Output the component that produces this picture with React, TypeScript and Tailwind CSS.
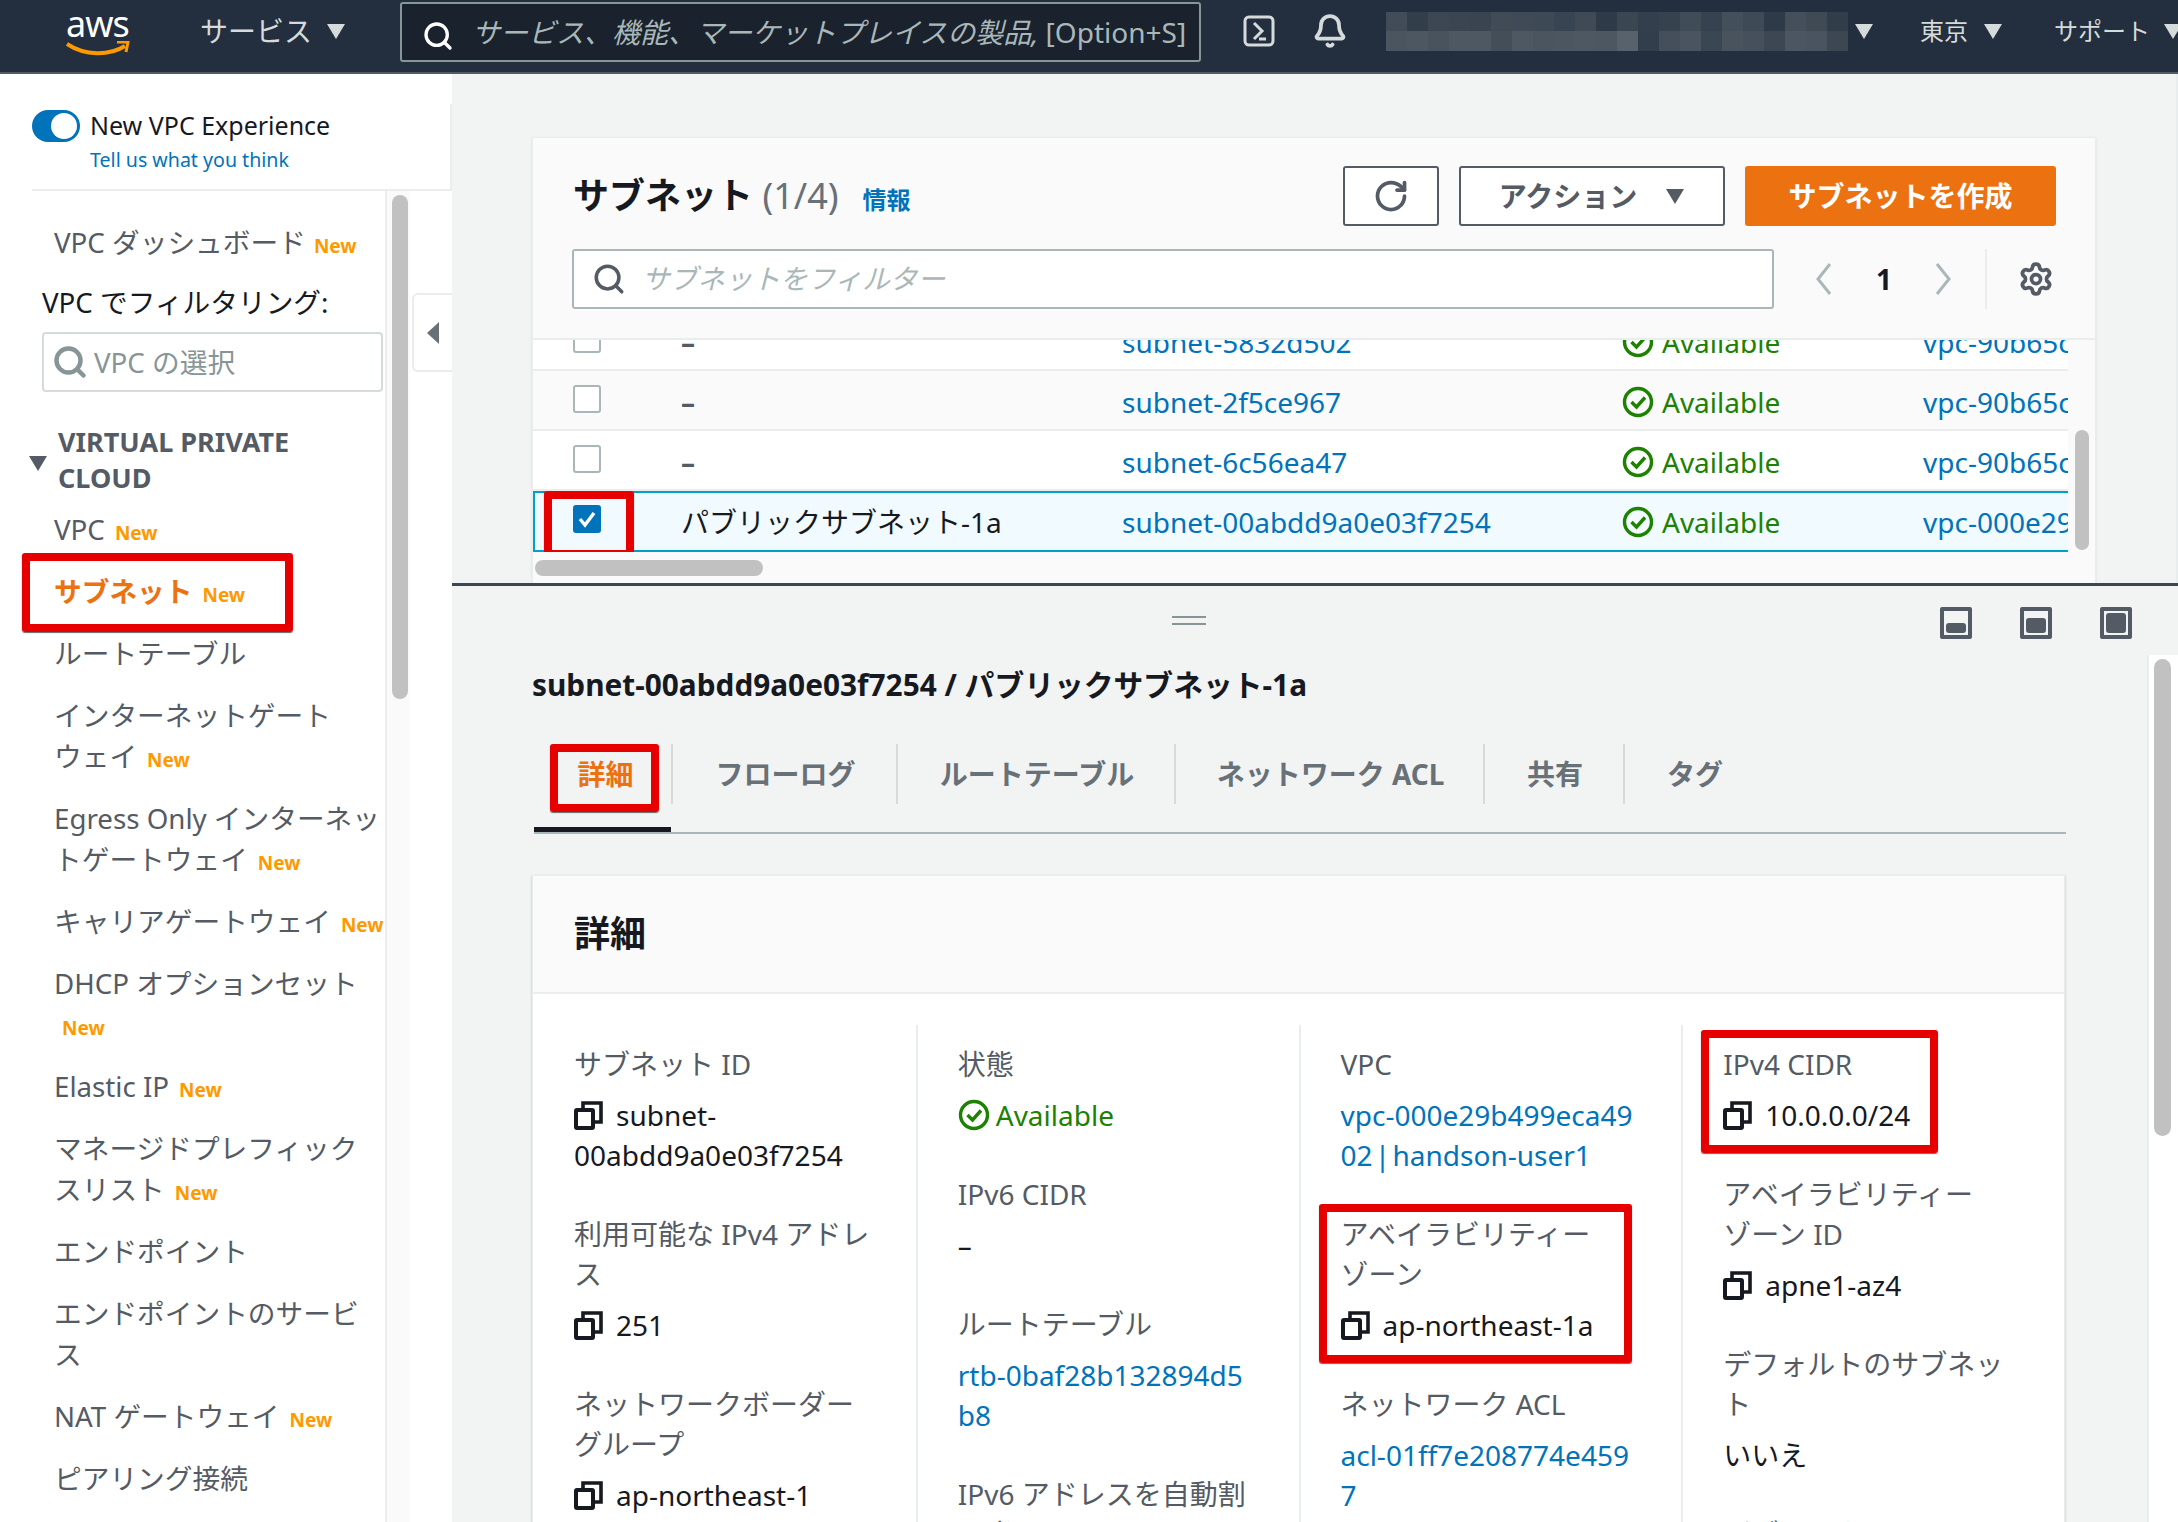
import React from 'react';
import { RotateCw, Search, Settings, Bell } from 'lucide-react';

const font = { fontFamily: '"Noto Sans", "Noto Sans CJK JP", sans-serif' };

const mosaicTop = ['#414c58', '#323e4a', '#3c4753', '#3a4551', '#394450', '#404b56', '#3f4a56', '#3d4955', '#384451', '#3f4a56', '#2e3a48', '#3a4652', '#333f4c', '#36424e', '#404c58', '#36424f', '#43505c', '#3e4a56', '#2e3a48', '#454f5b', '#3f4a55', '#323d4a'];
const mosaicBottom = ['#4a5560', '#4d5762', '#48535e', '#4e5862', '#4e5862', '#434e59', '#4e5863', '#4a5560', '#4c5661', '#4e5863', '#4d5762', '#58626c', '#323e4c', '#454f5b', '#4a5460', '#3a4651', '#48535e', '#46505c', '#3c4753', '#4c5662', '#4a5460', '#3c4751'];

function Caret({ className = '' }: { className?: string }) {
  return (
    <svg className={`shrink-0 ${className}`} width="20" height="17" viewBox="0 0 20 17">
      <path d="M1 1h18l-9 15z" fill="currentColor" />
    </svg>
  );
}

function New({ className = '' }: { className?: string }) {
  return <span className={`text-[19px] leading-none font-bold text-[#ff9900] ml-[8px] ${className}`}>New</span>;
}

function RedBox({ className }: { className: string }) {
  return <div className={`absolute border-[8px] border-[#e60000] rounded-[3px] shadow-[0_1px_1px_#666] pointer-events-none ${className}`} />;
}

function CopyIcon() {
  return (
    <svg className="shrink-0 mr-[13px] text-[#16191f]" width="29" height="29" viewBox="0 0 29 29" fill="none" stroke="currentColor" strokeWidth="4">
      <rect x="2" y="9" width="17" height="18" rx="1" />
      <path d="M9 8V2h18v19h-7" strokeWidth="3.6" />
    </svg>
  );
}

function CheckCircle({ size = 32 }: { size?: number }) {
  return (
    <svg className="shrink-0 text-[#1d8102]" width={size} height={size} viewBox="0 0 32 32" fill="none" stroke="currentColor">
      <circle cx="16" cy="16" r="13.5" strokeWidth="3.4" />
      <path d="M9.5 16l5 5 8.5-9.5" strokeWidth="3.4" />
    </svg>
  );
}

function PanelIcon({ inner }: { inner: string }) {
  return (
    <div className="w-[32px] h-[32px] border-[4px] border-[#545b64] rounded-[2px] flex items-end justify-center p-[2px]">
      <div className={`w-full bg-[#545b64] rounded-[3px] ${inner}`} />
    </div>
  );
}

function Chevron({ flip = false, className = '' }: { flip?: boolean; className?: string }) {
  return (
    <svg className={`shrink-0 text-[#aab7b8] ${className}`} width="18" height="34" viewBox="0 0 18 34" fill="none" stroke="currentColor" strokeWidth="3">
      <path d={flip ? 'M3 2l12 15L3 32' : 'M15 2L3 17l12 15'} />
    </svg>
  );
}

function TopNav() {
  return (
    <header className="h-[74px] shrink-0 bg-[#232f3e] border-b-[2px] border-[#545b64] flex items-center pb-[10px] text-[#d5dbdb] text-[28px] overflow-hidden">
      <div className="w-[200px] shrink-0 pl-[66px] flex flex-col items-start leading-none">
        <span className="text-white text-[36px] leading-[36px] tracking-[-1px]">aws</span>
        <svg className="-mt-[1px]" width="66" height="16" viewBox="0 0 66 16" fill="none">
          <path d="M1 3c18 12 42 12 58 2" stroke="#ff9900" strokeWidth="4" />
          <path d="M51 1l11 0-2 10" stroke="#ff9900" strokeWidth="3" />
        </svg>
      </div>
      <span className="w-[126px] shrink-0 whitespace-nowrap">サービス</span>
      <Caret />
      <div className="ml-[54px] w-[801px] h-[60px] shrink-0 bg-[#19222d] border-[2px] border-[#879596] rounded-[3px] flex items-center text-[#aab7b8] mt-[1px]">
        <Search className="ml-[20px] mr-[18px] mt-[9px] text-white shrink-0" size={32} strokeWidth={2.5} />
        <span className="whitespace-nowrap"><span className="italic">サービス、機能、マーケットプレイスの製品,</span> [Option+S]</span>
      </div>
      <svg className="ml-[42px] shrink-0" width="32" height="32" viewBox="0 0 32 32" fill="none" stroke="#d5dbdb" strokeWidth="3">
        <rect x="2" y="2" width="28" height="28" rx="4" />
        <path d="M11 8l8 8-8 8M16 24h7" />
      </svg>
      <Bell className="ml-[37px] shrink-0" size={36} strokeWidth={2.5} />
      <svg className="ml-[38px] shrink-0" width="462" height="39" viewBox="0 0 462 39" shapeRendering="crispEdges">
        {mosaicTop.map((c, i) => <rect key={i} x={i * 21} y="0" width="21" height="19" fill={c} />)}
        {mosaicBottom.map((c, i) => <rect key={i} x={i * 21} y="19" width="21" height="20" fill={c} />)}
      </svg>
      <Caret className="ml-[6px]" />
      <span className="ml-[46px] text-[24px] whitespace-nowrap shrink-0">東京</span>
      <Caret className="ml-[15px]" />
      <span className="ml-[51px] text-[24px] whitespace-nowrap shrink-0">サポート</span>
      <Caret className="ml-[13px]" />
    </header>
  );
}

const navItems: { lines: string[]; isNew?: boolean; newBelow?: boolean }[] = [
  { lines: ['VPC'], isNew: true },
  { lines: ['サブネット'], isNew: true },
  { lines: ['ルートテーブル'] },
  { lines: ['インターネットゲート', 'ウェイ'], isNew: true },
  { lines: ['Egress Only インターネッ', 'トゲートウェイ'], isNew: true },
  { lines: ['キャリアゲートウェイ'], isNew: true },
  { lines: ['DHCP オプションセット'], isNew: true, newBelow: true },
  { lines: ['Elastic IP'], isNew: true },
  { lines: ['マネージドプレフィック', 'スリスト'], isNew: true },
  { lines: ['エンドポイント'] },
  { lines: ['エンドポイントのサービ', 'ス'] },
  { lines: ['NAT ゲートウェイ'], isNew: true },
  { lines: ['ピアリング接続'] },
];

function Sidebar() {
  return (
    <aside className="w-[452px] shrink-0 h-full bg-white flex flex-col relative overflow-hidden">
      <div className="h-[117px] shrink-0 ml-[32px] border-b-[2px] border-[#eaeded] pt-[30px]">
        <div className="h-full border-r-[2px] border-[#eaeded] pt-[4px] flex flex-col">
          <div className="flex items-center h-[36px]">
            <div className="w-[48px] h-[32px] rounded-full bg-[#0073bb] flex items-center justify-end pr-[3px] shrink-0">
              <div className="w-[26px] h-[26px] rounded-full bg-white" />
            </div>
            <span className="ml-[10px] text-[25px] text-[#16191f] whitespace-nowrap">New VPC Experience</span>
          </div>
          <span className="ml-[58px] mt-[2px] text-[19.6px] leading-[28px] text-[#0073bb] whitespace-nowrap">Tell us what you think</span>
        </div>
      </div>
      <div className="flex-1 flex min-h-0">
        <nav className="w-[387px] shrink-0 border-r-[2px] border-[#eaeded] text-[27.7px] leading-[41px] text-[#545b64] overflow-hidden">
          <div className="pl-[54px] mt-[31px] whitespace-nowrap">
            VPC ダッシュボード<New />
          </div>
          <div className="pl-[42px] mt-[19px] text-[#16191f] whitespace-nowrap">VPC でフィルタリング:</div>
          <div className="ml-[42px] w-[341px] h-[60px] mt-[9px] border-[2px] border-[#d5dbdb] rounded-[4px] flex items-center text-[#879596]">
            <Search className="ml-[8px] mr-[6px] shrink-0" size={36} strokeWidth={3} />
            <span className="whitespace-nowrap">VPC の選択</span>
          </div>
          <div className="flex items-center mt-[31px] pl-[28px] h-[74px]">
            <Caret className="text-[#545b64] mt-[6px]" />
            <div className="ml-[10px] font-bold text-[27px] leading-[36px] whitespace-nowrap">VIRTUAL PRIVATE<br />CLOUD</div>
          </div>
          <ul className="mt-[12px] flex flex-col gap-[21px] pl-[54px]">
            {navItems.map((item) => {
              const active = item.lines[0] === 'サブネット';
              return (
                <li key={item.lines[0]} className={`relative whitespace-nowrap ${active ? 'font-bold text-[#ec7211]' : ''}`}>
                  {item.lines.map((line, i) => (
                    <div key={line}>
                      {line}
                      {item.isNew && !item.newBelow && i === item.lines.length - 1 && <New className="ml-[10px]" />}
                    </div>
                  ))}
                  {item.newBelow && <div><New /></div>}
                  {active && <RedBox className="-left-[32px] -top-[18px] w-[271px] h-[79px]" />}
                </li>
              );
            })}
          </ul>
        </nav>
        <div className="w-[23px] shrink-0 bg-[#fafafa] pt-[4px] pl-[5px]">
          <div className="w-[16px] h-[504px] rounded-full bg-[#c1c1c1]" />
        </div>
      </div>
      <div className="absolute left-[412px] top-[219px] w-[40px] h-[79px] bg-white border-[2px] border-r-0 border-[#eaeded] rounded-l-[6px] flex items-center justify-center">
        <svg width="14" height="24" viewBox="0 0 14 24"><path d="M13 1v22L1 12z" fill="#687078" /></svg>
      </div>
    </aside>
  );
}

const rows = [
  { name: '–', subnet: 'subnet-5832d502', vpc: 'vpc-90b65c7f', bg: 'bg-white' },
  { name: '–', subnet: 'subnet-2f5ce967', vpc: 'vpc-90b65c7f', bg: 'bg-[#fafafa]' },
  { name: '–', subnet: 'subnet-6c56ea47', vpc: 'vpc-90b65c7f', bg: 'bg-white' },
];

function SubnetPanel() {
  return (
    <section className="h-[509px] shrink-0 pt-[64px] pl-[80px] border-r-[2px] border-[#eaeded]">
      <div className="w-[1564px] h-full bg-[#fafafa] border-x border-[#eaeded] shadow-[0_0_2px_#d5dbdb] flex flex-col relative">
        <div className="h-[202px] shrink-0 border-b-[2px] border-[#eaeded]">
          <div className="flex items-center pt-[28px] pl-[40px] h-[88px]">
            <h1 className="text-[36px] font-bold text-[#16191f] whitespace-nowrap">サブネット <span className="font-normal text-[#687078]">(1/4)</span></h1>
            <span className="ml-[24px] mt-[8px] text-[24px] font-bold text-[#0073bb]">情報</span>
            <button className="ml-auto w-[96px] h-[60px] bg-white border-[2px] border-[#545b64] rounded-[3px] flex items-center justify-center text-[#545b64]">
              <RotateCw size={36} strokeWidth={2.5} />
            </button>
            <button className="ml-[20px] w-[266px] h-[60px] bg-white border-[2px] border-[#545b64] rounded-[3px] flex items-center justify-center text-[#545b64] text-[28px] font-bold">
              アクション<Caret className="ml-[28px]" />
            </button>
            <button className="ml-[20px] mr-[39px] w-[311px] h-[60px] bg-[#ec7211] rounded-[3px] text-white text-[28px] font-bold">サブネットを作成</button>
          </div>
          <div className="flex items-center mt-[23px] pl-[39px]">
            <div className="w-[1202px] h-[60px] bg-white border-[2px] border-[#aab7b8] rounded-[3px] flex items-center text-[#aab7b8] italic text-[27.6px]">
              <Search className="ml-[18px] mr-[16px] text-[#545b64] shrink-0" size={34} strokeWidth={2.5} />
              サブネットをフィルター
            </div>
            <Chevron className="ml-[41px]" />
            <span className="ml-[39px] w-[24px] text-center text-[28px] font-bold text-[#16191f]">1</span>
            <Chevron flip className="ml-[38px]" />
            <div className="ml-[33px] h-[60px] border-l-[2px] border-[#eaeded]" />
            <Settings className="ml-[31px] text-[#545b64]" size={36} strokeWidth={2.5} />
          </div>
        </div>
        <div className="w-[1535px] h-[212px] overflow-hidden text-[28px]">
          <div className="-mt-[29px]">
            {rows.map((row) => (
              <div key={row.subnet} className={`h-[60px] pt-[3px] flex items-center border-b-[2px] border-[#eaeded] ${row.bg}`}>
                <div className="w-[148px] shrink-0 pl-[40px]">
                  <div className="w-[28px] h-[28px] mb-[6px] border-[2px] border-[#aab7b8] rounded-[3px] bg-white" />
                </div>
                <span className="w-[441px] shrink-0 text-[#545b64] font-bold">{row.name}</span>
                <span className="w-[500px] shrink-0 text-[#0073bb] whitespace-nowrap">{row.subnet}</span>
                <CheckCircle />
                <span className="w-[269px] pl-[8px] shrink-0 text-[#1d8102]">Available</span>
                <span className="text-[#0073bb] whitespace-nowrap">{row.vpc}</span>
              </div>
            ))}
            <div className="h-[61px] flex items-center border-y-[2px] border-l-[2px] border-[#00a1c9] bg-[#f1faff]">
              <div className="w-[146px] shrink-0 pl-[38px] relative">
                <div className="w-[28px] h-[28px] mb-[6px] rounded-[3px] bg-[#0073bb] flex items-center justify-center">
                  <svg width="20" height="20" viewBox="0 0 20 20" fill="none" stroke="white" strokeWidth="3.4"><path d="M3 10l5 6 9-12" /></svg>
                </div>
                <RedBox className="left-[9px] -top-[14px] w-[90px] h-[67px]" />
              </div>
              <span className="w-[441px] shrink-0 text-[#16191f] whitespace-nowrap">パブリックサブネット-1a</span>
              <span className="w-[500px] shrink-0 text-[#0073bb] whitespace-nowrap">subnet-00abdd9a0e03f7254</span>
              <CheckCircle />
              <span className="w-[269px] pl-[8px] shrink-0 text-[#1d8102]">Available</span>
              <span className="text-[#0073bb] whitespace-nowrap">vpc-000e29b</span>
            </div>
          </div>
        </div>
        <div className="pt-[8px] pl-[2px]">
          <div className="w-[228px] h-[16px] rounded-full bg-[#c1c1c1]" />
        </div>
        <div className="absolute right-[6px] top-[292px] w-[14px] h-[120px] rounded-full bg-[#c1c1c1]" />
      </div>
    </section>
  );
}

type Line = { kind: 'label' | 'copy' | 'link' | 'text' | 'status'; lines: string[] };

const detailColumns: Line[][] = [
  [
    { kind: 'label', lines: ['サブネット ID'] },
    { kind: 'copy', lines: ['subnet-', '00abdd9a0e03f7254'] },
    { kind: 'label', lines: ['利用可能な IPv4 アドレ', 'ス'] },
    { kind: 'copy', lines: ['251'] },
    { kind: 'label', lines: ['ネットワークボーダー', 'グループ'] },
    { kind: 'copy', lines: ['ap-northeast-1'] },
  ],
  [
    { kind: 'label', lines: ['状態'] },
    { kind: 'status', lines: ['Available'] },
    { kind: 'label', lines: ['IPv6 CIDR'] },
    { kind: 'text', lines: ['–'] },
    { kind: 'label', lines: ['ルートテーブル'] },
    { kind: 'link', lines: ['rtb-0baf28b132894d5', 'b8'] },
    { kind: 'label', lines: ['IPv6 アドレスを自動割', 'り当て'] },
  ],
  [
    { kind: 'label', lines: ['VPC'] },
    { kind: 'link', lines: ['vpc-000e29b499eca49', '02 | handson-user1'] },
    { kind: 'label', lines: ['アベイラビリティー', 'ゾーン'] },
    { kind: 'copy', lines: ['ap-northeast-1a'] },
    { kind: 'label', lines: ['ネットワーク ACL'] },
    { kind: 'link', lines: ['acl-01ff7e208774e459', '7'] },
  ],
  [
    { kind: 'label', lines: ['IPv4 CIDR'] },
    { kind: 'copy', lines: ['10.0.0.0/24'] },
    { kind: 'label', lines: ['アベイラビリティー', 'ゾーン ID'] },
    { kind: 'copy', lines: ['apne1-az4'] },
    { kind: 'label', lines: ['デフォルトのサブネッ', 'ト'] },
    { kind: 'text', lines: ['いいえ'] },
    { kind: 'label', lines: ['パブリック IPv4 アド'] },
  ],
];

function Field({ kind, lines }: Line) {
  if (kind === 'label') {
    return <div className="text-[#545b64] mt-[39px] first:mt-0 mb-[11px]">{lines.map((l) => <div key={l}>{l}</div>)}</div>;
  }
  if (kind === 'status') {
    return (
      <div className="flex items-center text-[#1d8102] gap-[6px]"><CheckCircle />{lines[0]}</div>
    );
  }
  const color = kind === 'link' ? 'text-[#0073bb] [word-spacing:-5px]' : 'text-[#16191f]';
  return (
    <div className={color}>
      {lines.map((l, i) => (
        <div key={l} className="flex items-center whitespace-pre">
          {kind === 'copy' && i === 0 && <CopyIcon />}
          {l}
        </div>
      ))}
    </div>
  );
}

const tabs = [
  { label: 'フローログ', width: 'w-[225px]' },
  { label: 'ルートテーブル', width: 'w-[278px]' },
  { label: 'ネットワーク ACL', width: 'w-[309px]' },
  { label: '共有', width: 'w-[140px]' },
  { label: 'タグ', width: 'w-[140px]' },
];

function DetailPanel() {
  return (
    <section className="flex-1 min-h-0 border-t-[3px] border-[#3b4754] relative overflow-hidden">
      <div className="h-[62px] flex items-center relative pt-[6px]">
        <div className="ml-[720px] w-[34px] h-[9px] border-y-[2px] border-[#879596]" />
        <div className="ml-auto mr-[46px] flex gap-[48px] mt-[5px]">
          <PanelIcon inner="h-[10px]" />
          <PanelIcon inner="h-[15px]" />
          <PanelIcon inner="h-full" />
        </div>
      </div>
      <div className="pl-[80px] w-[1616px]">
        <h2 className="mt-[17px] text-[29.8px] leading-[40px] font-bold text-[#16191f] whitespace-nowrap">subnet-00abdd9a0e03f7254 / パブリックサブネット-1a</h2>
        <div className="mt-[39px] h-[90px] flex ml-[2px] w-[1532px] border-b-[2px] border-[#aab7b8] relative text-[28px] leading-[40px] font-bold text-[#687078]">
          <div className="w-[137px] h-[88px] relative flex items-start justify-center pt-[10px] border-b-[5px] border-[#16191f]">
            <span className="text-[#ec7211] ml-[6px]">詳細</span>
            <RedBox className="left-[16px] top-0 w-[109px] h-[68px]" />
          </div>
          {tabs.map((t) => (
            <div key={t.label} className={`h-[60px] pl-[2px] flex items-center justify-center border-l-[2px] border-[#d5dbdb] whitespace-nowrap ${t.width}`}>{t.label}</div>
          ))}
        </div>
        <div className="mt-[41px] w-[1533px] bg-white border border-[#eaeded] shadow-[0_1px_2px_#aab7b8] text-[28px] leading-[40px]">
          <div className="h-[118px] bg-[#fafafa] border-b-[2px] border-[#eaeded] flex items-center pl-[41px] text-[36px] font-bold text-[#16191f]">詳細</div>
          <div className="grid grid-cols-4 pt-[31px] h-[700px] whitespace-nowrap">
            {detailColumns.map((col, c) => (
              <div key={c} className={`pt-[19px] relative ${c === 0 ? 'pl-[41px]' : 'pl-[40px] border-l-[2px] border-[#eaeded]'}`}>
                {col.map((f, i) => <Field key={i} {...f} />)}
                {c === 2 && <RedBox className="left-[18px] top-[179px] w-[313px] h-[159px]" />}
                {c === 3 && <RedBox className="left-[18px] top-[5px] w-[237px] h-[123px]" />}
              </div>
            ))}
          </div>
        </div>
      </div>
      <div className="absolute right-0 top-[69px] bottom-0 w-[31px] bg-white border-l-[2px] border-[#eaeded] pt-[4px] pl-[5px]">
        <div className="w-[17px] h-[477px] rounded-full bg-[#c1c1c1]" />
      </div>
    </section>
  );
}

export default function App() {
  return (
    <div style={font} className="w-[2178px] h-[1522px] overflow-hidden flex flex-col bg-[#f2f3f3]">
      <TopNav />
      <div className="flex-1 min-h-0 flex">
        <Sidebar />
        <main className="flex-1 min-w-0 flex flex-col">
          <SubnetPanel />
          <DetailPanel />
        </main>
      </div>
    </div>
  );
}
